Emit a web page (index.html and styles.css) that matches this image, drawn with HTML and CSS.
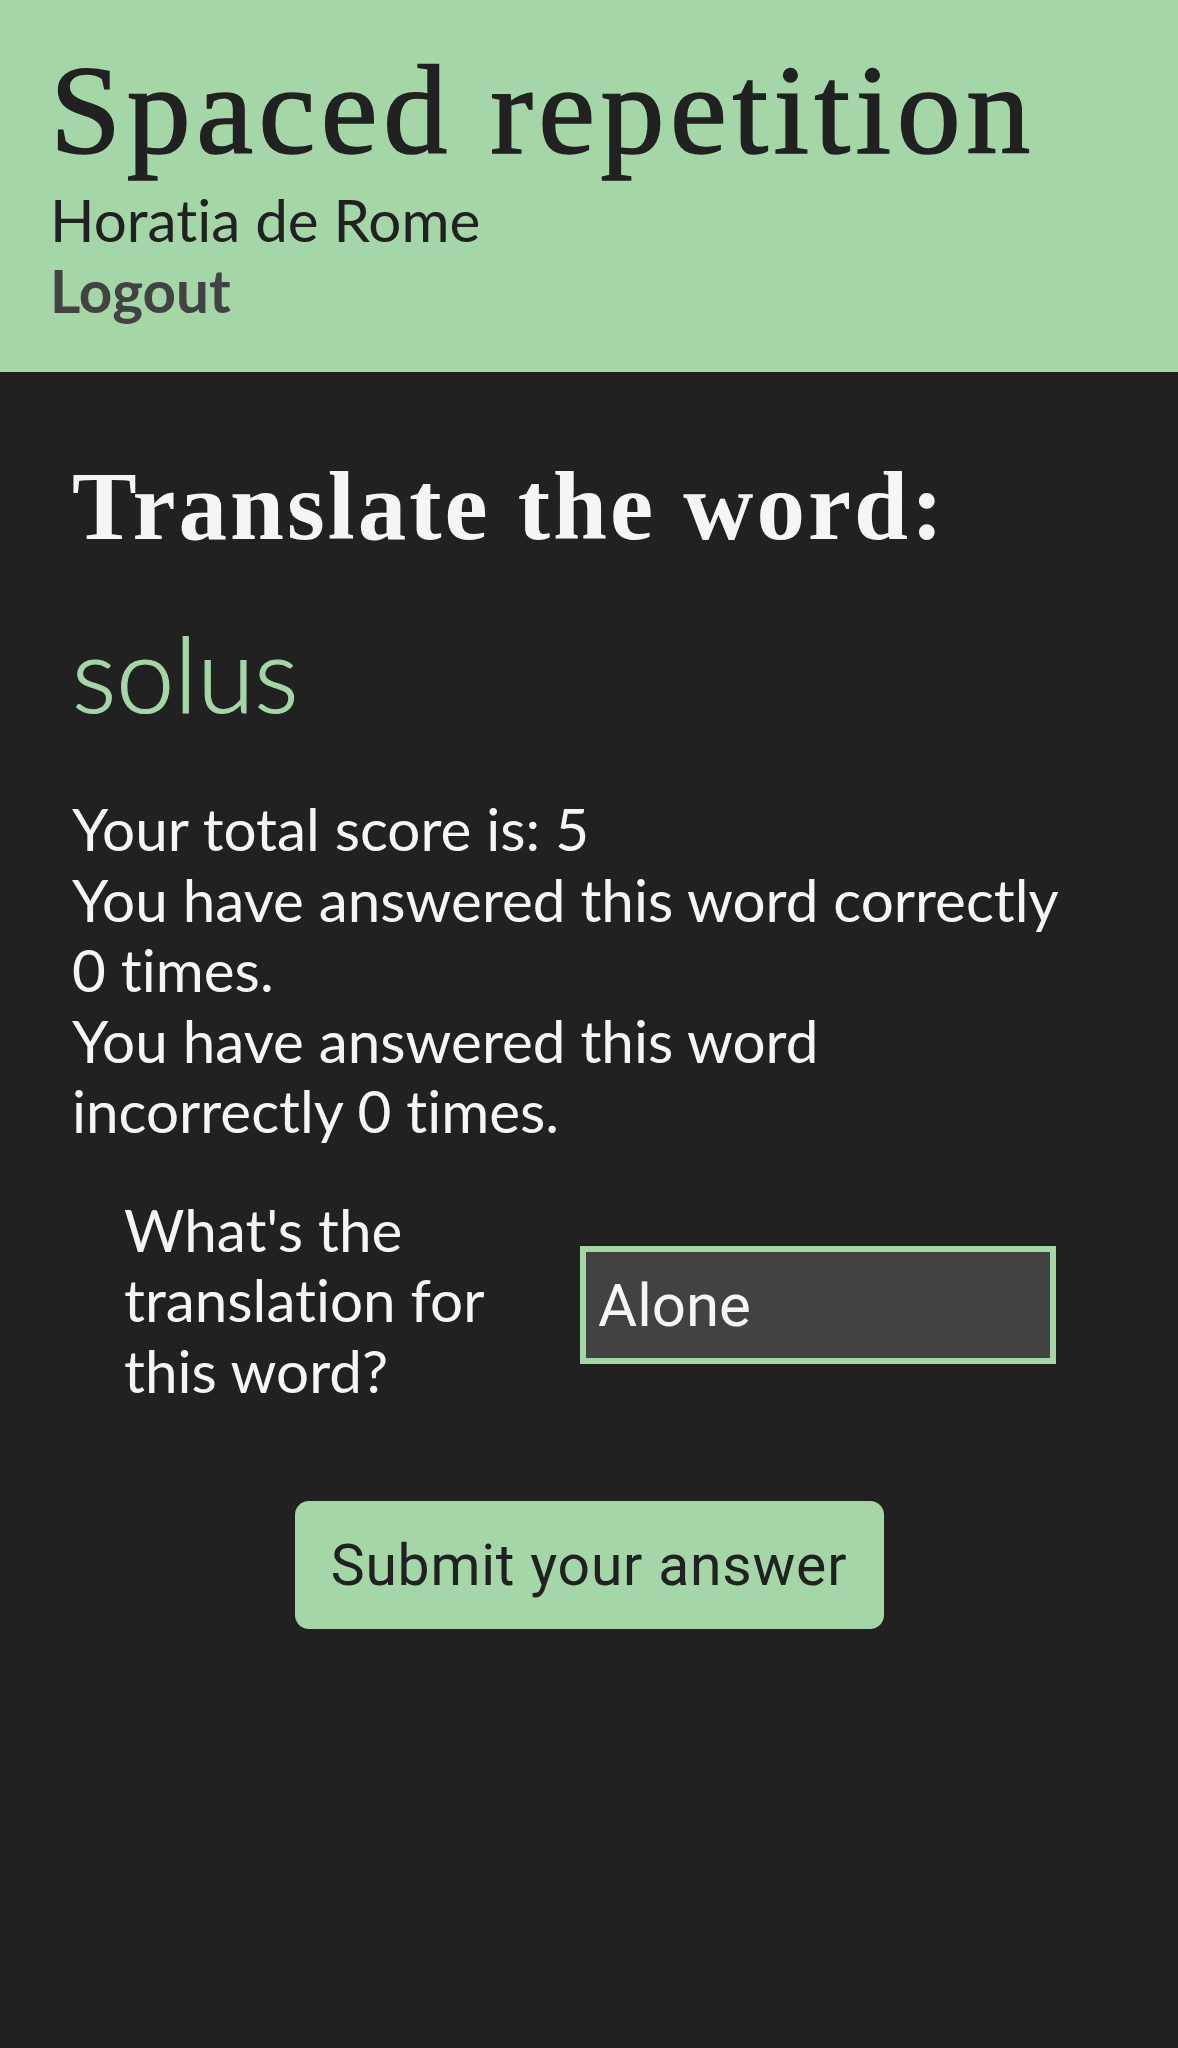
FILE: index.html
```html
<!DOCTYPE html>
<html lang="en">
<head>
<meta charset="utf-8">
<title>Spaced repetition</title>
<link rel="stylesheet" href="styles.css">
</head>
<body>
<header class="site-header">
  <h1 class="site-title">Spaced repetition</h1>
  <div class="user-name">Horatia de Rome</div>
  <a class="logout" href="#">Logout</a>
</header>
<main class="learn">
  <h2 class="learn-heading">Translate the word:</h2>
  <div class="learn-word">solus</div>
  <div class="stats">
    <div class="stat-line">Your total score is: 5</div>
    <div class="stat-line">You have answered this word correctly 0 times.</div>
    <div class="stat-line">You have answered this word incorrectly 0 times.</div>
  </div>
  <form class="answer-form">
    <div class="answer-row">
      <label class="answer-label" for="guess">What's the translation for this word?</label>
      <input class="answer-input" id="guess" type="text" value="Alone">
    </div>
    <div class="answer-actions">
      <button class="submit-btn" type="button">Submit your answer</button>
    </div>
  </form>
</main>
</body>
</html>
```
FILE: styles.css
```css
html, body {
  margin: 0;
  padding: 0;
}
body {
  background: #212121;
  color: #f5f5f5;
  font-family: Lato, "Noto Sans", sans-serif;
  font-variant-ligatures: none;
  font-feature-settings: "liga" 0, "clig" 0;
  min-height: 2048px;
}
.site-header {
  background: #a5d6a7;
  padding: 46px 50px 46px 50px;
  height: 372px;
  box-sizing: border-box;
}
.site-title {
  margin: 0;
  font-family: "Liberation Serif", serif;
  font-weight: 400;
  font-size: 128px;
  line-height: 128px;
  letter-spacing: 5.5px;
  color: #212121;
  -webkit-text-stroke: 1.6px #212121;
}
.user-name {
  margin-top: 10px;
  font-size: 58.4px;
  line-height: 71px;
  color: #212121;
}
.logout {
  display: block;
  font-size: 58.4px;
  line-height: 71px;
  font-weight: 700;
  color: #424242;
  text-decoration: none;
}
.learn {
  padding: 86px 72px 0 72px;
}
.learn-heading {
  margin: 0;
  font-family: "Liberation Serif", serif;
  font-weight: 700;
  font-size: 97px;
  line-height: 97px;
  letter-spacing: 3px;
  color: #f5f5f5;
}
.learn-word {
  margin-top: 66px;
  font-size: 104px;
  line-height: 104px;
  font-weight: 300;
  color: #a5d6a7;
  -webkit-text-stroke: 1.2px #a5d6a7;
}
.stats {
  margin-top: 68px;
  max-width: 1013px;
}
.stat-line {
  font-size: 58.4px;
  line-height: 70.5px;
}
.answer-form {
  margin-top: 48px;
}
.answer-row {
  display: flex;
  align-items: center;
  gap: 56px;
  padding-left: 52px;
}
.answer-label {
  width: 400px;
  flex: none;
  font-size: 58.4px;
  line-height: 70.5px;
}
.answer-input {
  width: 476px;
  height: 118px;
  flex: none;
  box-sizing: border-box;
  margin-top: 12px;
  border: 6px solid #a5d6a7;
  background: #424242;
  color: #f5f5f5;
  font-family: Roboto, sans-serif;
  font-size: 60px;
  padding: 0 12px;
  outline: none;
}
.answer-actions {
  display: flex;
  justify-content: center;
  margin-top: 96px;
}
.submit-btn {
  height: 128px;
  width: 589px;
  border: none;
  border-radius: 14px;
  background: #a5d6a7;
  color: #212121;
  font-family: Roboto, sans-serif;
  font-size: 57px;
  letter-spacing: 0.8px;
  white-space: nowrap;
  padding: 0 20px;
}
```
